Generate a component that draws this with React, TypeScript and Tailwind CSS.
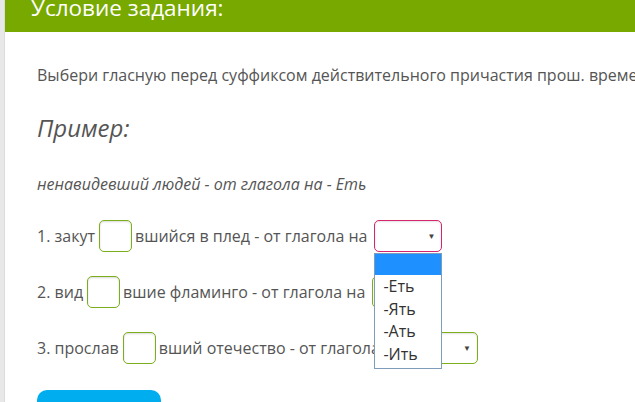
import { useState } from 'react';

const options = ['-Еть', '-Ять', '-Ать', '-Ить'];

function Gap() {
  return (
    <span className="inline-block w-[33px] h-[32px] ml-[4px] mr-[3px] rounded-[5px] border border-[#7bae1c] bg-white shadow-[inset_0_1px_2px_rgba(0,0,0,0.15)] align-middle" />
  );
}

function Select({ focused, open }: { focused?: boolean; open?: boolean }) {
  return (
    <span className="relative inline-block align-middle ml-[7px]">
      <span
        className={`flex items-center justify-end w-[68px] h-[32px] rounded-[5px] border bg-white pr-[6px] shadow-[inset_0_1px_2px_rgba(0,0,0,0.12)] ${
          focused ? 'border-[#d6246e]' : 'border-[#7bae1c]'
        }`}
      >
        <span className="text-[8px] text-[#444] leading-none">▼</span>
      </span>
      {open && (
        <span className="absolute left-0 top-[33px] z-10 flex flex-col w-[68px] pb-[3px] border border-[#7f9db9] bg-white">
          <span className="h-[21px] bg-[#1e90ff]" />
          {options.map((o) => (
            <span key={o} className="h-[22.5px] pl-[8px] leading-[22.5px] text-[16px] text-[#333]">
              {o}
            </span>
          ))}
        </span>
      )}
    </span>
  );
}

export default function App() {
  const [rows] = useState([
    { n: '1.', pre: 'закут', post: 'вшийся в плед - от глагола на', open: true },
    { n: '2.', pre: 'вид', post: 'вшие фламинго - от глагола на', open: false },
    { n: '3.', pre: 'прослав', post: 'вший отечество - от глагола на', open: false },
  ]);

  return (
    <div className="flex w-[635px] h-[402px] overflow-hidden bg-white font-['Open_Sans',sans-serif] text-[#555]">
      <div className="w-[5px] shrink-0 bg-[#e8e8e8] border-r border-[#dcdcdc]" />
      <div className="flex-1 flex flex-col min-w-0">
        <div className="h-[32px] shrink-0 bg-[#77a900] pl-[26px] overflow-hidden">
          <h2 className="-mt-[7px] text-[22.5px] leading-[30px] text-white whitespace-nowrap">Условие задания:</h2>
        </div>
        <div className="pl-[32px] flex flex-col">
          <p className="mt-[32px] text-[16px] leading-[22px] whitespace-nowrap">
            Выбери гласную перед суффиксом действительного причастия прош. времени
          </p>
          <h3 className="mt-[26px] text-[24px] leading-[32px] italic text-[#555]">Пример:</h3>
          <p className="mt-[30px] text-[16px] leading-[20px] italic whitespace-nowrap">
            ненавидевший людей - от глагола на - Еть
          </p>
          <div className="mt-[26px] flex flex-col gap-[24px]">
            {rows.map((r, i) => (
              <div
                key={r.n}
                className={`flex items-center h-[32px] text-[16px] whitespace-nowrap ${i === 0 ? 'relative z-10' : ''}`}
              >
                <span>
                  {r.n} {r.pre}
                </span>
                <Gap />
                <span>{r.post}</span>
                <Select focused={r.open} open={r.open} />
              </div>
            ))}
          </div>
          <button className="mt-[26px] w-[124px] h-[40px] rounded-[10px] bg-[#00aeef]" />
        </div>
      </div>
    </div>
  );
}
